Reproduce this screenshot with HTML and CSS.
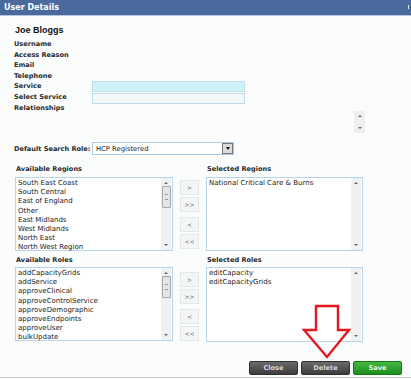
FILE: index.html
```html
<!DOCTYPE html>
<html lang="en">
<head>
  <meta charset="UTF-8">
  <title>User Details</title>
  <link rel="stylesheet" href="styles.css">
</head>
<body>
  <div class="dialog">
    <div class="titlebar">
      <span class="title">User Details</span>
      <span class="close-x"></span>
    </div>

    <div class="content">
      <h1>Joe Bloggs</h1>

      <div class="field"><label>Username</label></div>
      <div class="field"><label>Access Reason</label></div>
      <div class="field"><label>Email</label></div>
      <div class="field"><label>Telephone</label></div>
      <div class="field"><label>Service</label><div class="input input-service"></div></div>
      <div class="field field-rel">
        <label>Select Service Relationships</label>
        <div class="input input-rel"></div>
        <div class="rel-scroll">
          <span class="arrow up"></span>
          <span class="arrow down"></span>
        </div>
      </div>

      <div class="role-row">
        <label>Default Search Role:</label>
        <div class="select">
          <span>HCP Registered</span>
          <span class="select-btn"><i></i></span>
        </div>
      </div>

      <!-- Regions -->
      <div class="transfer transfer-regions">
        <div class="t-label left">Available Regions</div>
        <div class="t-label right">Selected Regions</div>
        <div class="listbox left">
          <ul>
            <li>South East Coast</li>
            <li>South Central</li>
            <li>East of England</li>
            <li>Other</li>
            <li>East Midlands</li>
            <li>West Midlands</li>
            <li>North East</li>
            <li>North West Region</li>
          </ul>
          <div class="vscroll">
            <span class="arrow up"></span>
            <span class="thumb"></span>
            <span class="arrow down"></span>
          </div>
        </div>
        <div class="movers">
          <button>&gt;</button>
          <button>&gt;&gt;</button>
          <button class="spaced">&lt;</button>
          <button>&lt;&lt;</button>
        </div>
        <div class="listbox right">
          <ul>
            <li>National Critical Care &amp; Burns</li>
          </ul>
          <div class="vscroll">
            <span class="arrow up"></span>
            <span class="arrow down"></span>
          </div>
        </div>
      </div>

      <!-- Roles -->
      <div class="transfer transfer-roles">
        <div class="t-label left">Available Roles</div>
        <div class="t-label right">Selected Roles</div>
        <div class="listbox left">
          <ul>
            <li>addCapacityGrids</li>
            <li>addService</li>
            <li>approveClinical</li>
            <li>approveControlService</li>
            <li>approveDemographic</li>
            <li>approveEndpoints</li>
            <li>approveUser</li>
            <li>bulkUpdate</li>
          </ul>
          <div class="vscroll">
            <span class="arrow up"></span>
            <span class="thumb"></span>
            <span class="arrow down"></span>
          </div>
        </div>
        <div class="movers">
          <button>&gt;</button>
          <button>&gt;&gt;</button>
          <button class="spaced">&lt;</button>
          <button>&lt;&lt;</button>
        </div>
        <div class="listbox right tall">
          <ul>
            <li>editCapacity</li>
            <li>editCapacityGrids</li>
          </ul>
          <div class="vscroll">
            <span class="arrow up"></span>
            <span class="arrow down"></span>
          </div>
        </div>
      </div>
    </div>

    <div class="footer">
      <button class="btn btn-dark">Close</button>
      <button class="btn btn-dark">Delete</button>
      <button class="btn btn-green">Save</button>
    </div>

    <!-- red annotation arrow -->
    <svg class="annotation" width="52" height="58" viewBox="300 303 52 58">
      <polygon points="316,306 338,306 338,330 349,330 327,357 304,330 316,330"
               fill="none" stroke="#e5161d" stroke-width="2.4" stroke-linejoin="miter"/>
    </svg>
  </div>
</body>
</html>
```

FILE: styles.css
```css
body {
  margin: 0;
  padding: 0;
  background: #fbfdfd;
  font-family: 'DejaVu Sans', Verdana, sans-serif;
  color: #222;
}

.dialog {
  position: relative;
  width: 411px;
  height: 379px;
  display: flex;
  flex-direction: column;
  overflow: hidden;
}

.titlebar {
  height: 15px;
  background: #4a6a9e;
  border-bottom: 1px solid #b7c6dc;
  display: flex;
  align-items: center;
  justify-content: space-between;
  padding: 0 0 0 4px;
}

.title {
  color: #fff;
  font-weight: bold;
  font-size: 8px;
}

.close-x {
  width: 2px;
  height: 4px;
  border-left: 1px solid #dfe6f0;
  margin-top: -1px;
}

.content {
  padding: 0 0 0 14px;
  width: 351px;
}

h1 {
  font-family: 'Liberation Sans', Arial, sans-serif;
  font-size: 9px;
  line-height: 13px;
  margin: 8px 0 2px 1px;
  color: #111;
}

label {
  font-weight: bold;
  font-size: 6.6px;
  color: #2a2a2a;
}

.field {
  display: flex;
  align-items: center;
  min-height: 10.5px;
}

.field label {
  width: 78px;
  flex-shrink: 0;
  line-height: 10.5px;
}

.input {
  width: 153px;
  height: 11px;
  box-sizing: border-box;
}

.input-service {
  background: #cdf2fb;
  border: 1px solid #c6dde6;
}

.field-rel {
  align-items: flex-start;
}

.input-rel {
  margin-top: 1px;
  background: #f3f8f9;
  border: 1px solid #bcdcee;
}

.rel-scroll {
  margin: 19px 0 0 auto;
  width: 11px;
  height: 22px;
  background: #eef0f0;
  display: flex;
  flex-direction: column;
  justify-content: space-between;
  align-items: center;
  padding: 4px 0;
  box-sizing: border-box;
}

.role-row {
  display: flex;
  align-items: center;
  margin-top: 9px;
  height: 13px;
}

.role-row label {
  width: 78px;
}

.select {
  width: 142px;
  height: 13px;
  box-sizing: border-box;
  border: 1px solid #a9cbe6;
  background: #fff;
  display: flex;
  align-items: center;
  justify-content: space-between;
  font-size: 6.8px;
  padding-left: 3px;
}

.select-btn {
  width: 11px;
  height: 11px;
  box-sizing: border-box;
  background: #dcdcdc;
  border: 1px solid #777;
  display: flex;
  align-items: center;
  justify-content: center;
}

.select-btn i {
  width: 0;
  height: 0;
  border-left: 2.5px solid transparent;
  border-right: 2.5px solid transparent;
  border-top: 3px solid #111;
}

/* dual list pickers */
.transfer {
  display: grid;
  grid-template-columns: 158px 33px 157px;
  grid-template-rows: 10px auto;
  margin-left: 1px;
}

.transfer-regions {
  margin-top: 9px;
  row-gap: 3px;
}

.transfer-roles {
  margin-top: 4px;
  row-gap: 2px;
}

.t-label {
  font-weight: bold;
  font-size: 6.6px;
  line-height: 10px;
  color: #2a2a2a;
}

.t-label.left { grid-column: 1; grid-row: 1; padding-left: 1px; }
.t-label.right { grid-column: 3; grid-row: 1; padding-left: 1px; }

.listbox {
  grid-row: 2;
  height: 74px;
  box-sizing: border-box;
  border: 1px solid #b8d4ec;
  background: #fff;
  display: flex;
  justify-content: space-between;
}

.listbox.left { grid-column: 1; }
.listbox.right { grid-column: 3; }
.listbox.tall { height: 75px; }

.listbox ul {
  list-style: none;
  margin: 0;
  padding: 1px 0 0 2px;
  font-size: 7px;
  line-height: 9.2px;
  color: #1a1a1a;
  white-space: nowrap;
}

.vscroll {
  width: 10px;
  margin-right: 1px;
  background: #f0f0f0;
  display: flex;
  flex-direction: column;
  align-items: center;
  padding: 4px 0;
  box-sizing: border-box;
  justify-content: space-between;
}

.thumb {
  width: 9px;
  height: 22px;
  box-sizing: border-box;
  background: #e4e4e4;
  border: 1px solid #a8a8a8;
  border-radius: 1px;
  margin: -2px 0 auto;
  position: relative;
}

.thumb::after {
  content: '';
  position: absolute;
  left: 2px;
  top: 7px;
  width: 3px;
  height: 4px;
  border-top: 1px solid #999;
  border-bottom: 1px solid #999;
}

.listbox.left .vscroll .arrow.up {
  margin-bottom: 4px;
}

.arrow {
  width: 0;
  height: 0;
  border-left: 2px solid transparent;
  border-right: 2px solid transparent;
}

.arrow.up { border-bottom: 2px solid #666; }
.arrow.down { border-top: 2px solid #666; }

.movers {
  grid-column: 2;
  grid-row: 2;
  display: flex;
  flex-direction: column;
  align-items: center;
  gap: 2px;
  padding-top: 3px;
}

.transfer-roles .movers {
  padding-top: 5px;
}

.movers button {
  width: 19px;
  height: 15px;
  padding: 0;
  background: #f4f6f6;
  border: 1px solid #e3e8e8;
  color: #555;
  font-family: 'DejaVu Sans', Verdana, sans-serif;
  font-size: 6px;
}

.movers .spaced {
  margin-top: 3px;
}

.footer {
  margin-top: auto;
  display: flex;
  justify-content: flex-end;
  gap: 3px;
  padding: 0 9px 2px 0;
  border-bottom: 1px solid #cbcbcb;
  margin-bottom: 1px;
}

.btn {
  width: 49px;
  height: 14px;
  padding: 0;
  border-radius: 2px;
  font-family: 'DejaVu Sans', Verdana, sans-serif;
  font-size: 6.6px;
  font-weight: bold;
  color: #d6d6d6;
}

.btn-dark {
  background: linear-gradient(#6b6b6b, #3c3c3c);
  border: 1px solid #2e2e2e;
}

.btn-green {
  background: linear-gradient(#42b842, #1d8f1d);
  border: 1px solid #187818;
  color: #e8f5e8;
}

.annotation {
  position: absolute;
  left: 300px;
  top: 303px;
}
```
